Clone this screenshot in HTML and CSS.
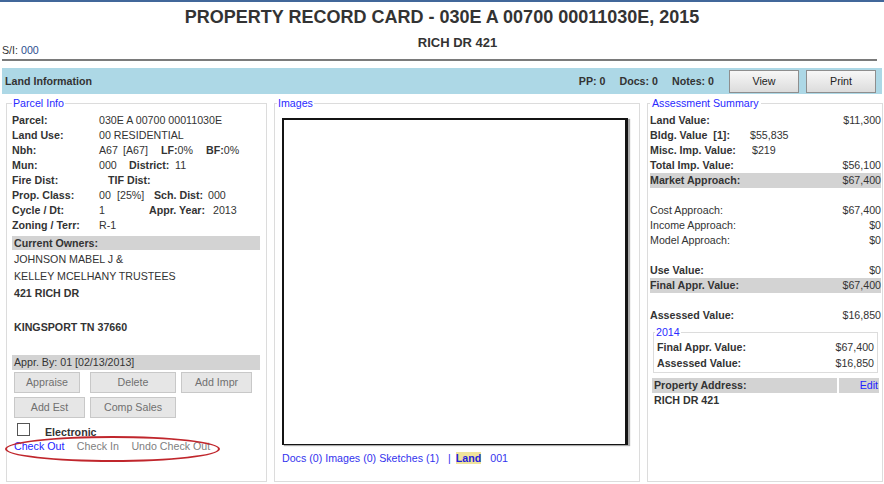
FILE: index.html
```html
<!DOCTYPE html>
<html lang="en">
<head>
<meta charset="UTF-8" />
<meta name="viewport" content="width=device-width, initial-scale=1.0"/>
<title>Property Record Card</title>
<link rel="stylesheet" href="styles.css">
</head>
<body>
<div class="topline"></div>

<h1 class="title">PROPERTY RECORD CARD - 030E A 00700 00011030E, 2015</h1>
<div class="subrow">
  <div class="si">S/I: <span class="si-num">000</span></div>
  <div class="addr">RICH DR 421</div>
  <div></div>
</div>
<div class="rule"></div>

<!-- Section bar -->
<div class="landbar">
  <span>Land Information</span>
  <div class="counts">
    <span>PP: 0</span>
    <span>Docs: 0</span>
    <span>Notes: 0</span>
  </div>
  <button class="hbtn first">View</button>
  <button class="hbtn">Print</button>
</div>

<div class="columns">
  <!-- Parcel info -->
  <fieldset class="panel parcel">
    <legend>Parcel Info</legend>
    <div class="kv"><span class="k">Parcel:</span><span>030E A 00700 00011030E</span></div>
    <div class="kv"><span class="k">Land Use:</span><span>00 RESIDENTIAL</span></div>
    <div class="kv"><span class="k">Nbh:</span><span class="w24">A67</span><span class="w38">[A67]</span><span class="w45"><b>LF:</b>0%</span><span><b>BF:</b>0%</span></div>
    <div class="kv"><span class="k">Mun:</span><span class="w30">000</span><span class="w46"><b>District:</b></span><span>11</span></div>
    <div class="kv"><span class="k">Fire Dist:</span><span class="ml9"><b>TIF Dist:</b></span></div>
    <div class="kv"><span class="k">Prop. Class:</span><span class="w18">00</span><span class="w37">[25%]</span><span class="w54"><b>Sch. Dist:</b></span><span>000</span></div>
    <div class="kv"><span class="k">Cycle / Dt:</span><span class="w50">1</span><span class="w64"><b>Appr. Year:</b></span><span>2013</span></div>
    <div class="kv"><span class="k">Zoning / Terr:</span><span>R-1</span></div>

    <div class="bar owners-head">Current Owners:</div>
    <div class="owners">
      <div>JOHNSON MABEL J &amp;</div>
      <div>KELLEY MCELHANY TRUSTEES</div>
      <div class="b">421 RICH DR</div>
      <div>&nbsp;</div>
      <div class="b">KINGSPORT TN 37660</div>
    </div>

    <div class="bar appr-bar">Appr. By: 01 [02/13/2013]</div>
    <div class="actions">
      <button class="abtn narrow">Appraise</button>
      <button class="abtn">Delete</button>
      <button class="abtn">Add Impr</button>
      <button class="abtn">Add Est</button>
      <button class="abtn">Comp Sales</button>
    </div>

    <div class="electronic">
      <span class="box"></span>
      <span class="elabel">Electronic</span>
    </div>
    <div class="checklinks">
      <span class="link">Check Out</span><span class="off">Check In</span><span class="off">Undo Check Out</span>
      <span class="ring"></span>
    </div>
  </fieldset>

  <!-- Images -->
  <fieldset class="panel images">
    <legend>Images</legend>
    <div class="photo"></div>
    <div class="imglinks">
      <span>Docs (0)</span> <span>Images (0)</span> <span>Sketches (1)</span><span class="sep">|</span><span class="land">Land</span><span class="lot">001</span>
    </div>
  </fieldset>

  <!-- Assessment -->
  <fieldset class="panel summary">
    <legend>Assessment Summary</legend>
    <div class="rrow"><span class="k b">Land Value:</span><span class="v">$11,300</span></div>
    <div class="rrow mid"><span class="k b">Bldg. Value &nbsp;[1]:</span><span>$55,835</span></div>
    <div class="rrow mid"><span class="k b">Misc. Imp. Value:</span><span class="ml2">$219</span></div>
    <div class="rrow"><span class="k b">Total Imp. Value:</span><span class="v">$56,100</span></div>
    <div class="rrow shade"><span class="k b">Market Approach:</span><span class="v">$67,400</span></div>
    <div class="blank"></div>
    <div class="rrow"><span class="k">Cost Approach:</span><span class="v">$67,400</span></div>
    <div class="rrow"><span class="k">Income Approach:</span><span class="v">$0</span></div>
    <div class="rrow"><span class="k">Model Approach:</span><span class="v">$0</span></div>
    <div class="blank"></div>
    <div class="rrow"><span class="k b">Use Value:</span><span class="v">$0</span></div>
    <div class="rrow shade"><span class="k b">Final Appr. Value:</span><span class="v">$67,400</span></div>
    <div class="blank"></div>
    <div class="rrow"><span class="k b">Assessed Value:</span><span class="v">$16,850</span></div>

    <fieldset class="yearbox">
      <legend>2014</legend>
      <div class="yrow"><span class="k">Final Appr. Value:</span><span>$67,400</span></div>
      <div class="yrow"><span class="k">Assessed Value:</span><span>$16,850</span></div>
    </fieldset>

    <div class="paddr">
      <span class="ph">Property Address:</span>
      <span class="edit">Edit</span>
    </div>
    <div class="paddr-val">RICH DR 421</div>
  </fieldset>
</div>
</body>
</html>
```

FILE: styles.css
```css
body {
  margin: 0;
  font-family: Arial, "Liberation Sans", sans-serif;
  font-size: 10.67px;
  color: #333;
  background: #fff;
}
.b {
  font-weight: bold;
}
.topline {
  height: 2px;
  background: #41679a;
}
.title {
  margin: 4px 0 0;
  font-size: 18px;
  line-height: 22px;
  text-align: center;
  font-weight: bold;
  color: #333;
}
.subrow {
  display: grid;
  grid-template-columns: 1fr auto 1fr;
  align-items: end;
  padding-top: 7px;
}
.si {
  padding-left: 2px;
  line-height: 14px;
}
.si-num {
  color: #2c4f8f;
}
.addr {
  font-size: 13px;
  font-weight: bold;
  line-height: 16px;
  padding: 0 0 6px 31px;
}
.rule {
  height: 2px;
  background: #7a7a7a;
  margin: 2px 7px 0 2px;
}

/* Land Information bar */
.landbar {
  margin: 7px 2px 0;
  height: 26px;
  background: #add8e6;
  display: flex;
  align-items: center;
  padding: 0 6px 0 3px;
  font-weight: bold;
}
.counts {
  margin-left: auto;
  display: flex;
  gap: 14px;
}
.hbtn {
  width: 70px;
  height: 23px;
  margin-left: 7px;
  padding: 0;
  font: inherit;
  font-weight: normal;
  color: #222;
  border: 1px solid #8e8e8e;
  background: linear-gradient(#f7f7f7, #dcdcdc);
}
.hbtn.first {
  margin-left: 15px;
}

/* Columns */
.columns {
  display: grid;
  grid-template-columns: 261px 366px 236px;
  column-gap: 7px;
  margin: 3px 0 0 6px;
}
.panel {
  margin: 0;
  min-width: 0;
  height: 385px;
  box-sizing: border-box;
  border: 1px solid #dcdcdc;
  padding: 3px 6px 0 5px;
}
legend {
  padding: 0 1px;
  color: #2a2aff;
  line-height: 13px;
}

/* Parcel info */
.kv {
  display: flex;
  height: 15px;
  line-height: 15px;
  white-space: nowrap;
}
.kv .k {
  width: 87px;
  flex: none;
  font-weight: bold;
}
.kv span {
  display: inline-block;
}
.w18 { width: 18px; }
.w24 { width: 24px; }
.w30 { width: 30px; }
.w37 { width: 37px; }
.w38 { width: 38px; }
.w45 { width: 45px; }
.w46 { width: 46px; }
.w50 { width: 50px; }
.w54 { width: 54px; }
.w64 { width: 64px; }
.ml9 { margin-left: 9px; }
.ml2 { margin-left: 2px; }

.bar {
  background: #d3d3d3;
  padding-left: 2px;
}
.owners-head {
  margin-top: 2.5px;
  height: 14px;
  line-height: 14px;
  font-weight: bold;
}
.owners {
  margin-top: 1.5px;
  padding-left: 2px;
  line-height: 17px;
}
.appr-bar {
  margin-top: 18.5px;
  height: 15px;
  line-height: 15px;
}
.actions {
  display: grid;
  grid-template-columns: 71px 86px 71px;
  column-gap: 5px;
  row-gap: 4px;
  margin-top: 2px;
  padding-left: 2px;
}
.abtn {
  height: 21px;
  padding: 0;
  font: inherit;
  color: #707070;
  border: 1px solid #c8c8c8;
  background: #e6e6e6;
}
.abtn.narrow {
  width: 66px;
}
.electronic {
  display: flex;
  margin-top: 5px;
  padding-left: 5px;
}
.box {
  width: 13px;
  height: 13px;
  box-sizing: border-box;
  border: 1px solid #555;
  background: #fff;
}
.elabel {
  margin: 3px 0 0 15px;
  line-height: 13px;
  font-weight: bold;
}
.checklinks {
  position: relative;
  margin-top: 1.5px;
  padding-left: 2px;
  line-height: 13px;
}
.checklinks span {
  margin-right: 12.5px;
}
.link {
  color: #2424ff;
}
.off {
  color: #808080;
}
.checklinks .ring {
  position: absolute;
  left: -7px;
  top: -4.5px;
  width: 215px;
  height: 26px;
  margin: 0;
  box-sizing: border-box;
  border: 2px solid #c0262c;
  border-radius: 50%;
}

/* Images */
.images {
  padding-left: 2px;
}
.photo {
  margin: 4.5px 0 0 5px;
  width: 346px;
  height: 327px;
  box-sizing: border-box;
  border-style: solid;
  border-color: #141414;
  border-width: 2px 3px 1px 2px;
  box-shadow: 2px 1px 1px #aaa;
  background: #fff;
}
.imglinks {
  margin-top: 7.5px;
  padding-left: 5px;
  line-height: 13px;
  color: #3333ee;
}
.sep {
  margin-left: 9px;
}
.land {
  margin-left: 5px;
  font-weight: bold;
  background: #efe39b;
  color: #2222dd;
}
.lot {
  margin-left: 9px;
}

/* Assessment summary */
.summary {
  padding: 3px 1px 0 2px;
}
.summary > legend {
  padding: 0 2px;
}
.rrow {
  display: flex;
  height: 15px;
  line-height: 15px;
  white-space: nowrap;
}
.rrow .k {
  flex: 1;
}
.rrow.mid .k {
  flex: none;
  width: 100px;
}
.rrow .v {
  text-align: right;
}
.shade {
  background: #d3d3d3;
}
.blank {
  height: 15px;
}
.yearbox {
  margin: 3px 3px 0;
  min-width: 0;
  border: 1px solid #dcdcdc;
  padding: 0 3px 1px;
}
.yearbox legend {
  margin-left: -2px;
}
.yrow {
  display: flex;
  justify-content: space-between;
  height: 16px;
  line-height: 16px;
}
.yrow .k {
  font-weight: bold;
}
.paddr {
  display: grid;
  grid-template-columns: 1fr 40px;
  column-gap: 2px;
  margin: 5px 2px 0;
  line-height: 15px;
}
.paddr span {
  background: #d3d3d3;
}
.ph {
  padding-left: 2px;
  font-weight: bold;
}
.edit {
  text-align: right;
  padding-right: 1px;
  color: #2424ff;
}
.paddr-val {
  padding-left: 4px;
  line-height: 15px;
  font-weight: bold;
}
```
